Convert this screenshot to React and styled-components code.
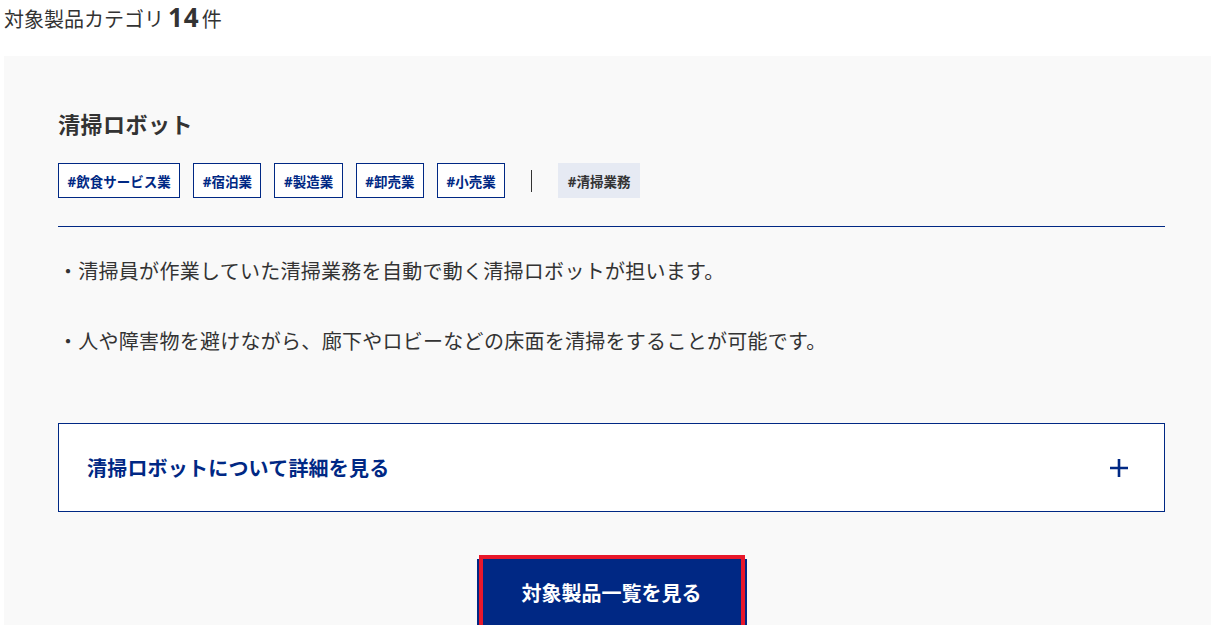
import styled, { createGlobalStyle } from 'styled-components';

const GlobalStyle = createGlobalStyle`
  html, body {
    margin: 0;
    padding: 0;
    background: #fff;
    overflow: hidden;
  }
  body {
    font-family: "Noto Sans", "Noto Sans CJK JP", sans-serif;
    color: #333;
  }
`;

const NAVY = '#002884';

const Page = styled.div`
  padding-left: 4px;
  width: 1215px;
`;

const Heading = styled.h2`
  margin: 0;
  height: 56px;
  padding-top: 1px;
  box-sizing: border-box;
  font-size: 20px;
  font-weight: 400;
  line-height: 32px;
  color: #333;
`;

const Count = styled.strong`
  font-size: 26px;
  font-weight: 700;
  letter-spacing: 1px;
  margin: 0 2px 0 4px;
`;

const Panel = styled.section`
  background: #f9f9f9;
  padding: 52px 54px 0;
`;

const Title = styled.h3`
  margin: 0;
  font-size: 22px;
  font-weight: 700;
  line-height: 33px;
  letter-spacing: 0.5px;
  color: #333;
`;

const TagRow = styled.div`
  display: flex;
  align-items: center;
  gap: 13px;
  margin-top: 22px;
  padding-bottom: 28px;
  border-bottom: 1px solid ${NAVY};
`;

const Tag = styled.span`
  display: inline-flex;
  align-items: center;
  height: 35px;
  box-sizing: border-box;
  padding: 0 8.5px;
  font-size: 13.5px;
  font-weight: 700;
  color: ${(p) => (p.$filled ? '#333' : NAVY)};
  background: ${(p) => (p.$filled ? '#e6eaf3' : '#fff')};
  border: 1px solid ${(p) => (p.$filled ? '#e6eaf3' : NAVY)};
`;

const Separator = styled.span`
  width: 1px;
  height: 22px;
  background: #333;
  margin: 0 13px;
`;

const Body = styled.div`
  padding-top: 25px;
`;

const Paragraph = styled.p`
  margin: 0 0 30px;
  font-size: 20px;
  line-height: 40px;
  letter-spacing: 0.28px;
  color: #333;

  &:last-child {
    margin-bottom: 0;
  }
`;

const Accordion = styled.button`
  display: flex;
  align-items: center;
  justify-content: space-between;
  width: 100%;
  height: 89px;
  margin-top: 61px;
  padding: 0 36px 0 28px;
  box-sizing: border-box;
  background: #fff;
  border: 1px solid ${NAVY};
  font-family: inherit;
  font-size: 20px;
  font-weight: 700;
  letter-spacing: 0.2px;
  color: ${NAVY};
  cursor: pointer;
`;

const Footer = styled.div`
  display: flex;
  justify-content: center;
  padding-top: 47px;
`;

const ListButton = styled.a`
  position: relative;
  display: flex;
  align-items: center;
  justify-content: center;
  width: 270px;
  height: 66px;
  background: ${NAVY};
  color: #fff;
  font-size: 20px;
  font-weight: 700;
  text-decoration: none;

  &::after {
    content: '';
    position: absolute;
    top: -4px;
    left: 2px;
    right: 2px;
    bottom: -4px;
    border: 4px solid #e8182b;
  }
`;

const PlusIcon = () => (
  <svg width="18" height="18" viewBox="0 0 18 18" aria-hidden="true">
    <path d="M9 0v18M0 9h18" stroke={NAVY} strokeWidth="2.6" fill="none" />
  </svg>
);

const industries = ['飲食サービス業', '宿泊業', '製造業', '卸売業', '小売業'];

const App = () => {
  return (
    <Page>
      <GlobalStyle />
      <Heading>
        対象製品カテゴリ<Count>14</Count>件
      </Heading>
      <Panel>
        <Title>清掃ロボット</Title>
        <TagRow>
          {industries.map((name) => (
            <Tag key={name}>#{name}</Tag>
          ))}
          <Separator />
          <Tag $filled>#清掃業務</Tag>
        </TagRow>
        <Body>
          <Paragraph>・清掃員が作業していた清掃業務を自動で動く清掃ロボットが担います。</Paragraph>
          <Paragraph>・人や障害物を避けながら、廊下やロビーなどの床面を清掃をすることが可能です。</Paragraph>
        </Body>
        <Accordion type="button">
          清掃ロボットについて詳細を見る
          <PlusIcon />
        </Accordion>
        <Footer>
          <ListButton href="#">対象製品一覧を見る</ListButton>
        </Footer>
      </Panel>
    </Page>
  );
};

export default App;
